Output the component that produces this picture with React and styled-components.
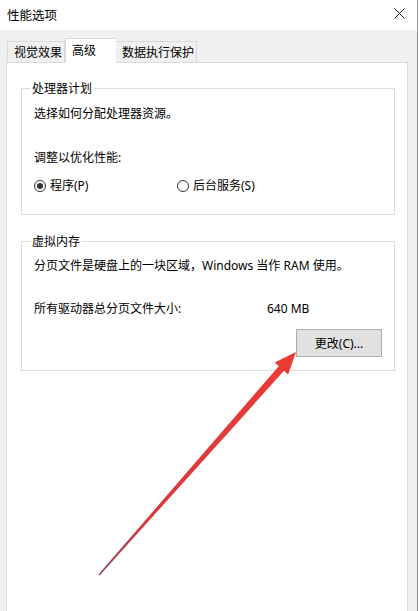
import React from "react";
import styled, { createGlobalStyle } from "styled-components";

const GlobalStyle = createGlobalStyle`
  html, body {
    margin: 0;
    padding: 0;
    background: #ffffff;
  }
  body {
    font-family: "Noto Sans", "Noto Sans CJK SC", sans-serif;
    font-size: 12px;
    color: #000;
  }
`;

const Window = styled.div`
  position: relative;
  box-sizing: border-box;
  width: 418px;
  height: 611px;
  display: flex;
  flex-direction: column;
  border-right: 1px solid #8593a3;
  overflow: hidden;
`;

const TitleBar = styled.div`
  height: 30px;
  flex: none;
  background: #fff;
  display: flex;
  align-items: center;
  justify-content: space-between;
  padding: 0 12px 0 7px;
  font-size: 12.5px;
  line-height: 17px;
`;

const CloseIcon = styled.svg`
  width: 11px;
  height: 11px;
  margin-top: -3px;
`;

const Body = styled.div`
  flex: 1;
  background: #f0f0f0;
  display: flex;
  flex-direction: column;
  padding: 8px 9px 0 6px;
`;

const TabRow = styled.div`
  display: flex;
  align-items: flex-end;
  height: 25px;
  padding-left: 1px;
  margin-bottom: -1px;
  position: relative;
  z-index: 1;
`;

const Tab = styled.div`
  box-sizing: border-box;
  width: ${(p) => p.w}px;
  height: ${(p) => (p.active ? 25 : 22)}px;
  background: ${(p) => (p.active ? "#fff" : "#f0f0f0")};
  border: 1px solid #d9d9d9;
  border-bottom: ${(p) => (p.active ? "1px solid #fff" : "1px solid #d9d9d9")};
  border-left: ${(p) => (p.first || p.active ? "1px solid #d9d9d9" : "none")};
  border-right: ${(p) => (p.active ? "none" : "1px solid #d9d9d9")};
  padding: ${(p) => (p.active ? "3px 0 0 6px" : "2px 0 0 6px")};
  line-height: 17px;
  white-space: nowrap;
`;

const Panel = styled.div`
  flex: 1;
  background: #fff;
  border: 1px solid #d9d9d9;
  border-bottom: none;
  padding: 17px 12px 0 14px;
`;

const Group = styled.fieldset`
  margin: 0 0 ${(p) => p.gap || 0}px 0;
  padding: 0 12px ${(p) => p.pb}px 12px;
  border: 1px solid #dcdcdc;
  min-width: 0;
`;

const Legend = styled.legend`
  padding: 0 2px;
  margin-left: -4px;
  line-height: 17px;
`;

const Line = styled.div`
  line-height: 17px;
  margin-top: ${(p) => p.mt}px;
  white-space: nowrap;
`;

const RadioRow = styled.div`
  display: grid;
  grid-template-columns: 143px auto;
  margin-top: ${(p) => p.mt}px;
  line-height: 17px;
`;

const RadioItem = styled.label`
  display: flex;
  align-items: center;
  gap: 4px;
`;

const RadioCircle = styled.span`
  box-sizing: border-box;
  width: 12px;
  height: 12px;
  border-radius: 50%;
  border: 1px solid #333;
  display: flex;
  align-items: center;
  justify-content: center;
  &::after {
    content: "";
    width: 6px;
    height: 6px;
    border-radius: 50%;
    background: ${(p) => (p.checked ? "#333" : "transparent")};
  }
`;

const SizeRow = styled.div`
  display: grid;
  grid-template-columns: 233px auto;
  line-height: 17px;
  margin-top: ${(p) => p.mt}px;
`;

const ButtonRow = styled.div`
  display: flex;
  justify-content: flex-end;
  margin-top: 12px;
`;

const Button = styled.button`
  box-sizing: border-box;
  width: 86px;
  height: 28px;
  background: #e1e1e1;
  border: 1px solid #adadad;
  font: inherit;
  color: #000;
  padding: 0;
`;

const Arrow = styled.svg`
  position: absolute;
  left: 0;
  top: 0;
  pointer-events: none;
`;

const Radio = ({ checked, children }) => (
  <RadioItem>
    <RadioCircle checked={checked} />
    <span>{children}</span>
  </RadioItem>
);

const App = () => {
  return (
    <React.Fragment>
      <GlobalStyle />
      <Window>
        <TitleBar>
          <span>性能选项</span>
          <CloseIcon viewBox="0 0 11 11">
            <path d="M0.5 0.5 L10.5 10.5 M10.5 0.5 L0.5 10.5" stroke="#222" strokeWidth="1" fill="none" />
          </CloseIcon>
        </TitleBar>
        <Body>
          <TabRow>
            <Tab w={58} first>视觉效果</Tab>
            <Tab w={51} active>高级</Tab>
            <Tab w={81}>数据执行保护</Tab>
          </TabRow>
          <Panel>
            <Group pb={20} gap={18}>
              <Legend>处理器计划</Legend>
              <Line mt={8}>选择如何分配处理器资源。</Line>
              <Line mt={27}>调整以优化性能:</Line>
              <RadioRow mt={11}>
                <Radio checked>程序(P)</Radio>
                <Radio>后台服务(S)</Radio>
              </RadioRow>
            </Group>
            <Group pb={13}>
              <Legend>虚拟内存</Legend>
              <Line mt={7}>分页文件是硬盘上的一块区域，Windows 当作 RAM 使用。</Line>
              <SizeRow mt={26}>
                <span>所有驱动器总分页文件大小:</span>
                <span>640 MB</span>
              </SizeRow>
              <ButtonRow>
                <Button>更改(C)...</Button>
              </ButtonRow>
            </Group>
          </Panel>
        </Body>
        <Arrow width="419" height="611" viewBox="0 0 419 611">
          <defs>
            <linearGradient id="shaft" x1="99" y1="575" x2="296" y2="352" gradientUnits="userSpaceOnUse">
              <stop offset="0" stopColor="#8e4658" />
              <stop offset="0.25" stopColor="#d9383c" />
              <stop offset="1" stopColor="#ec3b36" />
            </linearGradient>
          </defs>
          <polygon
            points="99.6,575.5 98.4,574.5 278.8,366.2 274.7,362.5 296,352 288.1,374.5 284.0,370.8"
            fill="url(#shaft)"
          />
        </Arrow>
      </Window>
    </React.Fragment>
  );
};

export default App;
